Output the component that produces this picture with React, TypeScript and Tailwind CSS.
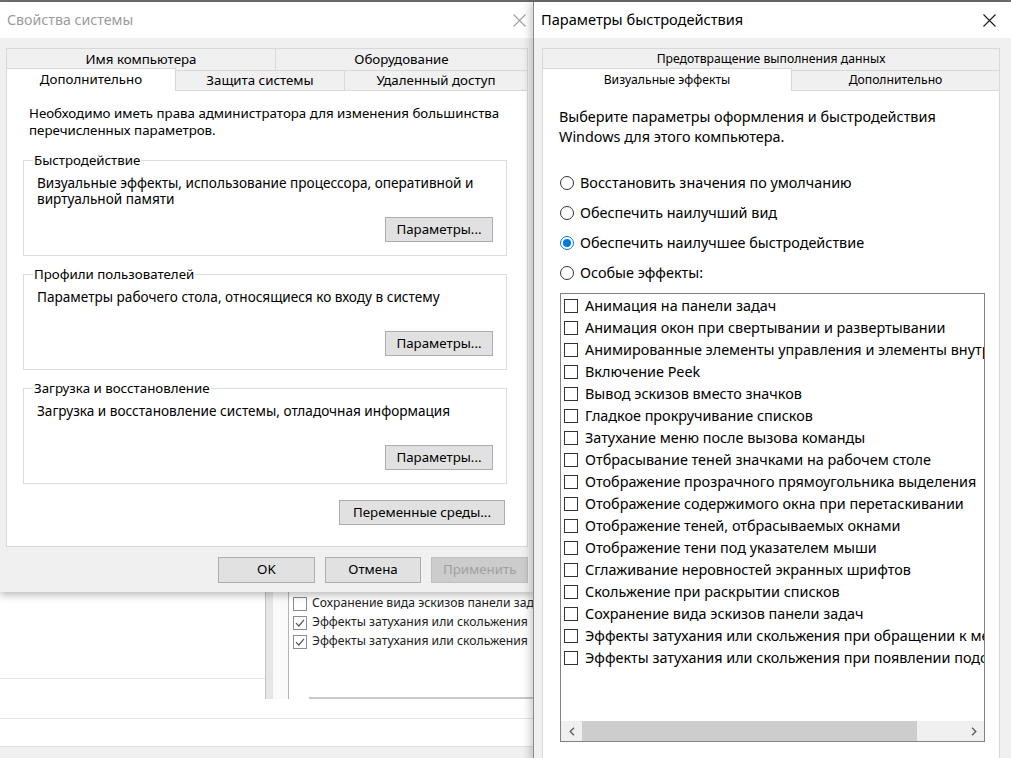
import React from 'react';

const effects = [
  'Анимация на панели задач',
  'Анимация окон при свертывании и развертывании',
  'Анимированные элементы управления и элементы внутри окна',
  'Включение Peek',
  'Вывод эскизов вместо значков',
  'Гладкое прокручивание списков',
  'Затухание меню после вызова команды',
  'Отбрасывание теней значками на рабочем столе',
  'Отображение прозрачного прямоугольника выделения',
  'Отображение содержимого окна при перетаскивании',
  'Отображение теней, отбрасываемых окнами',
  'Отображение тени под указателем мыши',
  'Сглаживание неровностей экранных шрифтов',
  'Скольжение при раскрытии списков',
  'Сохранение вида эскизов панели задач',
  'Эффекты затухания или скольжения при обращении к меню',
  'Эффекты затухания или скольжения при появлении подсказок',
];

const modes = [
  { label: 'Восстановить значения по умолчанию', checked: false },
  { label: 'Обеспечить наилучший вид', checked: false },
  { label: 'Обеспечить наилучшее быстродействие', checked: true },
  { label: 'Особые эффекты:', checked: false },
];

const groups = [
  {
    title: 'Быстродействие',
    text: ['Визуальные эффекты, использование процессора, оперативной и', 'виртуальной памяти'],
  },
  {
    title: 'Профили пользователей',
    text: ['Параметры рабочего стола, относящиеся ко входу в систему'],
  },
  {
    title: 'Загрузка и восстановление',
    text: ['Загрузка и восстановление системы, отладочная информация'],
  },
];

function CloseIcon({ color }: { color: string }) {
  return (
    <svg width="13" height="13" viewBox="0 0 13 13" fill="none">
      <path d="M0.5 0.5L12.5 12.5M12.5 0.5L0.5 12.5" stroke={color} strokeWidth="1.1" />
    </svg>
  );
}

function CheckBox({ checked = false, muted = false }: { checked?: boolean; muted?: boolean }) {
  return (
    <span
      className={`w-[14px] h-[14px] shrink-0 flex items-center justify-center bg-white border ${
        muted ? 'border-[#8c8c8c]' : 'border-[#333333]'
      }`}
    >
      {checked && (
        <svg width="10" height="10" viewBox="0 0 10 10" fill="none">
          <path d="M1 5.2L3.8 8L9 1.8" stroke="#555555" strokeWidth="1.2" />
        </svg>
      )}
    </span>
  );
}

function Radio({ checked = false }: { checked?: boolean }) {
  if (checked) {
    return (
      <span className="w-[14px] h-[14px] shrink-0 rounded-full border border-[#0078d7] bg-white flex items-center justify-center">
        <span className="w-[8px] h-[8px] rounded-full bg-[#0078d7]" />
      </span>
    );
  }
  return <span className="w-[14px] h-[14px] shrink-0 rounded-full border border-[#333333] bg-white" />;
}

function WinButton({ label, className, disabled }: { label: string; className: string; disabled?: boolean }) {
  return (
    <div
      className={`flex items-center justify-center border ${
        disabled ? 'border-[#bfbfbf] bg-[#cccccc] text-[#a0a0a0]' : 'border-[#adadad] bg-[#e1e1e1] text-black'
      } ${className}`}
    >
      {label}
    </div>
  );
}

function Chevron({ dir }: { dir: 'left' | 'right' }) {
  return (
    <svg width="6" height="9" viewBox="0 0 6 9" fill="none">
      <path d={dir === 'left' ? 'M5 0.8L1.2 4.5L5 8.2' : 'M1 0.8L4.8 4.5L1 8.2'} stroke="#606060" strokeWidth="1.4" />
    </svg>
  );
}

// окно на заднем плане, видна только нижняя часть
function BackgroundWindow() {
  return (
    <div className="absolute left-0 top-[590px] w-[533px] h-[168px] overflow-hidden bg-white flex flex-col">
      <div className="h-[109px] flex">
        <div className="w-[265px] flex flex-col">
          <div className="h-[88px]" />
          <div className="h-px bg-[#e3e3e3]" />
        </div>
        <div className="w-[8px] bg-[#e6e6e6] border-l border-[#c4c4c4]" />
        <div className="w-[15px] bg-[#fafafa]" />
        <div className="flex-1 min-w-0 border-l border-[#b4b4b4] bg-white flex flex-col pt-[4px] pl-[4px] overflow-hidden text-[12.2px] text-[#222222] whitespace-nowrap">
          <div className="h-[19px] flex items-center gap-[5px]">
            <CheckBox muted />
            <span>Сохранение вида эскизов панели задач</span>
          </div>
          <div className="h-[19px] flex items-center gap-[5px]">
            <CheckBox muted checked />
            <span>Эффекты затухания или скольжения</span>
          </div>
          <div className="h-[19px] flex items-center gap-[5px]">
            <CheckBox muted checked />
            <span>Эффекты затухания или скольжения</span>
          </div>
          <div className="mt-auto ml-[16px] h-[2px] bg-[#c8c8c8]" />
        </div>
      </div>
      <div className="h-[19px]" />
      <div className="h-px bg-[#e5e5e5]" />
      <div className="h-[27px]" />
      <div className="h-px bg-[#e0e0e0]" />
      <div className="flex-1 bg-[#f0f0f0]" />
    </div>
  );
}

function SystemProperties() {
  return (
    <div className="absolute left-0 top-[2px] w-[534px] h-[590px] flex flex-col bg-[#f0f0f0] shadow-[0_3px_8px_rgba(0,0,0,0.28)]">
      <div className="h-[36px] shrink-0 bg-white flex items-center justify-between pl-[7px] pr-[8px]">
        <span className="text-[14.2px] text-[#9b9b9b]">Свойства системы</span>
        <CloseIcon color="#a0a0a0" />
      </div>
      <div className="flex flex-col px-[6px] pt-[10px] text-[13.3px]">
        <div className="flex h-[22px]">
          <div className="w-[269px] border-t border-l border-[#d9d9d9] bg-[#f0f0f0] flex justify-center pt-[1px]">
            Имя компьютера
          </div>
          <div className="flex-1 border-t border-x border-[#d9d9d9] bg-[#f0f0f0] flex justify-center pt-[1px]">
            Оборудование
          </div>
        </div>
        <div className="flex items-end h-[22px] -mt-[2px]">
          <div className="relative z-10 w-[170px] h-[23px] -mb-px bg-white border-t border-x border-[#d9d9d9] flex justify-center pt-[1px]">
            Дополнительно
          </div>
          <div className="w-[169px] h-[20px] bg-[#f0f0f0] border-t border-r border-[#d9d9d9] flex items-center justify-center">
            Защита системы
          </div>
          <div className="flex-1 h-[20px] bg-[#f0f0f0] border-t border-r border-[#d9d9d9] flex items-center justify-center">
            Удаленный доступ
          </div>
        </div>
        <div className="h-[457px] bg-white border border-[#d9d9d9] flex flex-col px-[16px] pt-[14px] leading-[17px]">
          <p className="pl-[6px]">
            Необходимо иметь права администратора для изменения большинства
            <br />
            перечисленных параметров.
          </p>
          {groups.map((g, i) => (
            <fieldset
              key={g.title}
              className={`w-[484px] border border-[#dcdcdc] ${i === 0 ? 'mt-[13px]' : 'mt-[10px]'}`}
            >
              <legend className="ml-[9px] px-[1px] leading-[17px]">{g.title}</legend>
              <div className="h-[86px] flex flex-col pt-[6px] pb-[13px] pl-[13px] pr-[13px]">
                <p className="leading-[16px] text-[13.6px]">
                  {g.text.map((t, j) => (
                    <React.Fragment key={t}>
                      {j > 0 && <br />}
                      {t}
                    </React.Fragment>
                  ))}
                </p>
                <WinButton label="Параметры..." className="mt-auto self-end w-[108px] h-[25px]" />
              </div>
            </fieldset>
          ))}
          <div className="w-[484px] flex justify-end pr-[2px] mt-[16px]">
            <WinButton label="Переменные среды..." className="w-[166px] h-[25px]" />
          </div>
        </div>
        <div className="flex gap-[10px] pl-[212px] pt-[10px]">
          <WinButton label="OK" className="w-[98px] h-[26px]" />
          <WinButton label="Отмена" className="w-[98px] h-[26px]" />
          <WinButton label="Применить" className="w-[98px] h-[26px]" disabled />
        </div>
      </div>
    </div>
  );
}

function PerformanceOptions() {
  return (
    <div className="absolute left-[533px] top-[2px] w-[478px] h-[760px] flex flex-col bg-[#f0f0f0] border-l border-[#8c8c8c] shadow-[-3px_0_8px_rgba(0,0,0,0.2)]">
      <div className="h-[36px] shrink-0 bg-white flex items-center justify-between pl-[7px] pr-[15px]">
        <span className="text-[14.6px] text-black">Параметры быстродействия</span>
        <CloseIcon color="#1a1a1a" />
      </div>
      <div className="flex flex-col pl-[8px] pt-[10px]">
        <div className="w-[458px] h-[22px] border-t border-x border-[#d9d9d9] bg-[#f0f0f0] flex justify-center pt-[1px] text-[12.2px]">
          Предотвращение выполнения данных
        </div>
        <div className="flex items-end h-[22px] -mt-[2px] text-[12.2px]">
          <div className="relative z-10 w-[250px] h-[23px] -mb-px bg-white border-t border-x border-[#d9d9d9] flex justify-center pt-[2px]">
            Визуальные эффекты
          </div>
          <div className="w-[208px] h-[20px] bg-[#f0f0f0] border-t border-r border-[#d9d9d9] flex items-center justify-center">
            Дополнительно
          </div>
        </div>
        <div className="w-[458px] h-[680px] bg-white border border-[#d9d9d9] flex flex-col px-[16px] pt-[16px] text-[14.4px]">
          <p className="leading-[20px]">
            Выберите параметры оформления и быстродействия
            <br />
            Windows для этого компьютера.
          </p>
          <div className="mt-[21px] flex flex-col">
            {modes.map((m) => (
              <div key={m.label} className="h-[30px] flex items-center gap-[6px] pl-[1px]">
                <Radio checked={m.checked} />
                <span>{m.label}</span>
              </div>
            ))}
          </div>
          <div className="mt-[5px] ml-[1px] w-[425px] h-[449px] border border-[#828282] bg-white flex flex-col">
            <div className="flex flex-col pt-[1px] overflow-hidden whitespace-nowrap">
              {effects.map((e) => (
                <div key={e} className="h-[22px] flex items-center gap-[7px] pl-[3px]">
                  <CheckBox />
                  <span>{e}</span>
                </div>
              ))}
            </div>
            <div className="mt-auto h-[20px] flex items-stretch bg-[#f0f0f0]">
              <div className="w-[21px] flex items-center justify-center">
                <Chevron dir="left" />
              </div>
              <div className="w-[335px] bg-[#cdcdcd]" />
              <div className="flex-1" />
              <div className="w-[21px] flex items-center justify-center">
                <Chevron dir="right" />
              </div>
            </div>
          </div>
        </div>
      </div>
    </div>
  );
}

export default function App() {
  return (
    <div className="relative w-[1011px] h-[758px] overflow-hidden bg-white font-['Noto_Sans',sans-serif] text-black">
      <div className="absolute left-0 top-0 w-full h-[3px] bg-[#6e6e6e]" />
      <BackgroundWindow />
      <SystemProperties />
      <PerformanceOptions />
    </div>
  );
}
